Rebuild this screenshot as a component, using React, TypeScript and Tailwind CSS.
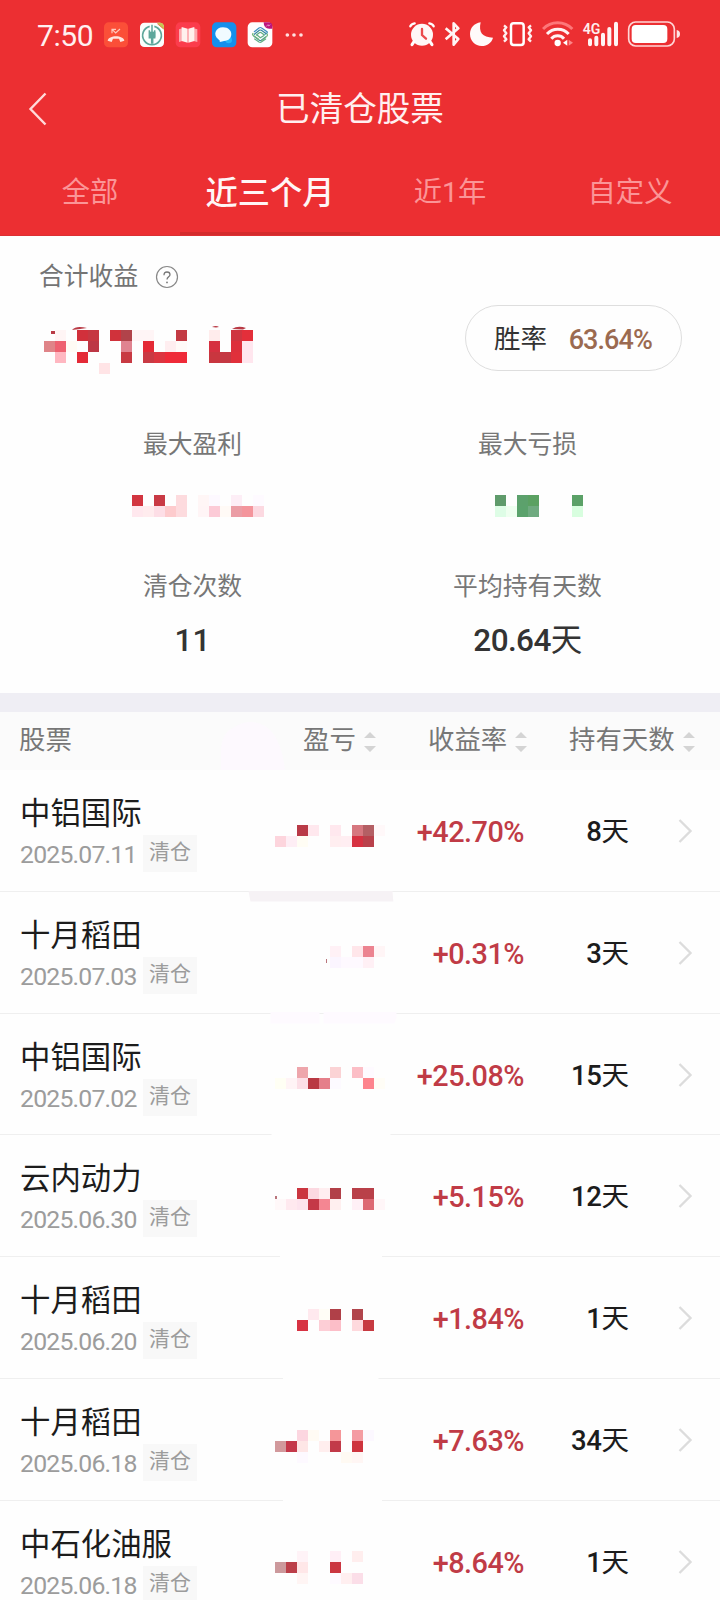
import type { ReactNode } from "react";

type Cell = [col: number, row: number, color: string];

const CELL = 11;

function Cells({ x, y, cells }: { x: number; y: number; cells: Cell[] }) {
  return (
    <g shapeRendering="crispEdges">
      {cells.map(([c, r, color]) => (
        <rect key={`${c}-${r}`} x={x + c * CELL} y={y + r * CELL} width={CELL} height={CELL} fill={color} />
      ))}
    </g>
  );
}

const totalCells: Cell[] = [
  [1, 0, "#fff5f5"], [3, 0, "#d1303b"], [4, 0, "#c63741"], [6, 0, "#d0323b"], [7, 0, "#b1434a"],
  [8, 0, "#fff5f6"], [9, 0, "#fff5f6"], [12, 0, "#c33b44"], [15, 0, "#ffecec"], [17, 0, "#cf3540"], [18, 0, "#e32f3a"],
  [0, 1, "#df8488"], [1, 1, "#ee6170"], [2, 1, "#fffbf5"], [4, 1, "#bd3745"], [7, 1, "#e08390"], [9, 1, "#e42a36"],
  [11, 1, "#ffeef0"], [12, 1, "#fffaf8"], [15, 1, "#d63040"], [17, 1, "#dd303c"], [18, 1, "#ffe6ee"],
  [1, 2, "#ffb7c1"], [3, 2, "#e42a37"], [7, 2, "#c83a43"], [9, 2, "#c93a44"], [10, 2, "#dc3540"], [11, 2, "#ef2a38"],
  [12, 2, "#ef2a38"], [15, 2, "#c9363f"], [16, 2, "#c53843"], [17, 2, "#e0303b"], [18, 2, "#ffe6ee"], [5, 3, "#ffe4e6"],
];

const profitCells: Cell[] = [
  [0, 0, "#d23540"], [2, 0, "#c93a45"], [4, 0, "#fddbde"], [6, 0, "#fff6f6"], [7, 0, "#fdf9ff"], [9, 0, "#fdeef6"], [11, 0, "#fefaff"],
  [0, 1, "#ffe8ee"], [1, 1, "#ffecee"], [2, 1, "#fddee6"], [3, 1, "#fdcbcd"], [4, 1, "#fddbde"], [6, 1, "#fff5f6"],
  [7, 1, "#fccbd7"], [8, 1, "#fffaf6"], [9, 1, "#eb9da5"], [10, 1, "#f4959c"], [11, 1, "#fcd9e1"],
];

const lossCells: Cell[] = [
  [0, 0, "#5f9b6b"], [2, 0, "#5ca16c"], [3, 0, "#5ba162"], [7, 0, "#5ba167"],
  [0, 1, "#defde6"], [1, 1, "#effff0"], [2, 1, "#5ba26c"], [3, 1, "#6faa80"], [7, 1, "#d8fedf"],
];

type Row = {
  name: string;
  date: string;
  rate: string;
  days: string;
  top: number;
  height: string;
  cellY: number;
  cells: Cell[];
  overlay?: ReactNode;
};

const rows: Row[] = [
  {
    name: "中铝国际", date: "2025.07.11", rate: "+42.70%", days: "8", top: 770, height: "h-[122px]", cellY: 825,
    cells: [
      [2, 0, "#b93a47"], [3, 0, "#ffe8ee"], [5, 0, "#ffe8ee"], [7, 0, "#d6777f"], [8, 0, "#b45f64"], [9, 0, "#fff8f9"],
      [0, 1, "#fdd5dd"], [1, 1, "#feeef5"], [2, 1, "#fffdf4"], [5, 1, "#ffeef0"], [6, 1, "#ffeef2"], [7, 1, "#d63141"], [8, 1, "#b9414b"],
    ],
    overlay: <path d="M248.5 891H392.5L393.3 901.6H250.5Z" fill="#f6f2f5" />,
  },
  {
    name: "十月稻田", date: "2025.07.03", rate: "+0.31%", days: "3", top: 892, height: "h-[122px]", cellY: 946,
    cells: [
      [5, 0, "#fff1f6"], [7, 0, "#ffe6ea"], [8, 0, "#ec8390"], [9, 0, "#fff5f6"],
      [5, 1, "#fbf5ff"], [6, 1, "#fef9ff"], [7, 1, "#fef9ff"], [8, 1, "#fff0f5"],
    ],
    overlay: (
      <>
        <rect x="326" y="959" width="1" height="4" fill="#b9757c" />
        <path d="M270.5 1012h49v11.5h-49zM323.5 1012h73v5l-2 6.5h-71z" fill="#fefaff" />
      </>
    ),
  },
  {
    name: "中铝国际", date: "2025.07.02", rate: "+25.08%", days: "15", top: 1014, height: "h-[121px]", cellY: 1067,
    cells: [
      [2, 0, "#eea6ac"], [5, 0, "#fbd3d5"], [7, 0, "#fcbec6"], [8, 0, "#fefaff"],
      [0, 1, "#fffff4"], [1, 1, "#fff4f6"], [2, 1, "#fcdfe7"], [3, 1, "#b93943"], [4, 1, "#e57f8a"], [5, 1, "#fdfaff"], [8, 1, "#fd848d"], [9, 1, "#fffdf6"],
    ],
    overlay: <rect x="271.5" y="1133" width="119" height="3" fill="#fefefe" />,
  },
  {
    name: "云内动力", date: "2025.06.30", rate: "+5.15%", days: "12", top: 1135, height: "h-[122px]", cellY: 1188,
    cells: [
      [2, 0, "#cb3640"], [3, 0, "#fcd9e1"], [4, 0, "#ffeef0"], [5, 0, "#b24048"], [7, 0, "#b94049"], [8, 0, "#b94049"],
      [0, 1, "#fff8f9"], [1, 1, "#ffe9ef"], [2, 1, "#fde4ee"], [3, 1, "#c43847"], [4, 1, "#f48692"], [5, 1, "#ffefef"], [7, 1, "#fff0f6"], [8, 1, "#dd6873"], [9, 1, "#fff6f8"],
    ],
    overlay: (
      <>
        <rect x="275" y="1196" width="2" height="3" fill="#b9757c" />
        <rect x="280" y="1255" width="102" height="3" fill="#fefefe" />
      </>
    ),
  },
  {
    name: "十月稻田", date: "2025.06.20", rate: "+1.84%", days: "1", top: 1257, height: "h-[122px]", cellY: 1309,
    cells: [
      [3, 0, "#ffe9ee"], [4, 0, "#fffdf6"], [5, 0, "#b04048"], [7, 0, "#b1454c"],
      [2, 1, "#d73343"], [4, 1, "#fdced6"], [5, 1, "#fcbec8"], [7, 1, "#fed9dd"], [8, 1, "#c73a41"],
    ],
    overlay: <rect x="283" y="1377" width="95.5" height="3" fill="#fefefe" />,
  },
  {
    name: "十月稻田", date: "2025.06.18", rate: "+7.63%", days: "34", top: 1379, height: "h-[122px]", cellY: 1430,
    cells: [
      [2, 0, "#fcd6e0"], [3, 0, "#fffbf4"], [5, 0, "#f59699"], [7, 0, "#f49ba3"], [8, 0, "#fcf8ff"],
      [0, 1, "#d2999c"], [1, 1, "#c5384a"], [2, 1, "#fee6e6"], [4, 1, "#ffeeee"], [5, 1, "#c23a49"], [7, 1, "#ce343e"],
      [2, 2, "#fdf9ff"], [6, 2, "#fffaf3"], [7, 2, "#fff6f4"],
    ],
    overlay: <rect x="283" y="1499" width="99" height="3" fill="#fefefe" />,
  },
  {
    name: "中石化油服", date: "2025.06.18", rate: "+8.64%", days: "1", top: 1501, height: "h-[122px]", cellY: 1551,
    cells: [
      [2, 0, "#fff3f7"], [5, 0, "#ffeff6"], [7, 0, "#ffeeee"],
      [0, 1, "#cc999c"], [1, 1, "#bc3f49"], [2, 1, "#ffe7e8"], [5, 1, "#cb3641"],
      [2, 2, "#fff5f4"], [5, 2, "#fefaff"], [6, 2, "#ffeff0"], [7, 2, "#fbdee8"],
    ],
  },
];

function Glyph({ box, className, children }: { box: string; className: string; children: ReactNode }) {
  return (
    <svg viewBox={box} className={`h-7 shrink-0 ${className}`} fill="none">
      {children}
    </svg>
  );
}

function StatusBar() {
  return (
    <div className="flex h-[70px] items-center pl-[37px] text-white">
      <span className="w-[66px] pt-px text-[30px] leading-[31px] tracking-[-0.4px] text-[#fff0f0]">7:50</span>
      <Glyph box="309 63 108 84" className="w-9">
        <rect x="312" y="67" width="72" height="75" rx="14" fill="#fb4f38" />
        <path d="M323 122c2-18 48-18 50 0l-12 4-4-10h-18l-4 10z" fill="#ffe5df" />
        <path d="M336 100V88h12M337 89l10 10 13-12" stroke="#ffc9bd" strokeWidth="3.5" />
      </Glyph>
      <Glyph box="417 63 108 84" className="w-9">
        <rect x="420" y="68" width="72" height="73" rx="13" fill="#fbfffd" />
        <path d="M471 68h8q13 0 13 13v8z" fill="#c8c552" />
        <path d="M472 71l18 15" stroke="#eb7a4e" strokeWidth="3" />
        <path d="M449 79a28 28 0 1 0 14 0" stroke="#5da79b" strokeWidth="5" />
        <path d="M448 91v22h7v18M464 91v22h-6v18M456 74v36" stroke="#5da79b" strokeWidth="4.5" />
        <rect x="447" y="95" width="19" height="17" fill="#5da79b" />
      </Glyph>
      <Glyph box="525 63 108 84" className="w-9">
        <rect x="527" y="67" width="74" height="75" rx="14" fill="#fb3c4c" />
        <path d="M537 88l10-3v38l-10 3zM581 85l11 3v38l-11-3z" fill="#fda9ae" />
        <path d="M545 81l18 5v42l-18-5zM583 81l-18 5v42l18-5z" fill="#fff1ee" />
      </Glyph>
      <Glyph box="633 63 108 84" className="w-9">
        <rect x="636" y="67" width="73" height="75" rx="14" fill="#158fec" />
        <circle cx="686" cy="120" r="10" fill="#27b5fa" />
        <path d="M669 82c33 0 33 41 3 41-4 0-7 3-13 3 2-4-1-5-4-8-17-13-9-36 14-36z" fill="#f1fbff" />
      </Glyph>
      <Glyph box="741 63 108 84" className="w-9">
        <rect x="743" y="67" width="74" height="75" rx="14" fill="#fffdfe" />
        <path d="M791 67h14q12 0 12 12v7h-9q-17 0-17-19z" fill="#bd147d" />
        <path d="M798 80l6-6 2 4 5-4" stroke="#f5c6e3" strokeWidth="2" />
        <g strokeWidth="3.6" strokeLinecap="round">
          <path d="M763 95l14-11q4-3 8 0l16 11q2 3-1 5l-5 3" stroke="#3c8fc0" />
          <path d="M763 103l15-12q3-2 6 0l13 9M762 109l16 12q3 2 6 0l13-10" stroke="#35879f" />
          <path d="M759 100q-3 3 0 6l17 12M801 102q3 3-1 7l-15 13" stroke="#72b87a" />
          <path d="M769 105l9-7q3-2 6 0l9 7M764 117l13 9q4 2 7 0l13-9M770 104l11 9 10-6" stroke="#61ae84" />
        </g>
      </Glyph>
      <Glyph box="849 63 72 84" className="w-6">
        <g fill="#ffe0e0">
          <circle cx="862" cy="105" r="5.5" />
          <circle cx="882" cy="105" r="5.5" />
          <circle cx="903" cy="105" r="5.5" />
        </g>
      </Glyph>
      <div className="ml-auto flex pr-[37px]">
        <Glyph box="144 63 105 84" className="w-[35px]">
          <circle cx="186" cy="104" r="33" fill="#fff7f7" />
          <path d="M151 79q3-7 13-9M221 79q-3-7-13-9" stroke="#fff" strokeWidth="7" strokeLinecap="round" />
          <path d="M162 125l-6 9M210 125l6 9" stroke="#fff" strokeWidth="9" strokeLinecap="round" />
          <path d="M186 87v18l12 11" stroke="#eb4a4c" strokeWidth="7" strokeLinecap="round" />
        </Glyph>
        <Glyph box="249 63 78 84" className="w-[26px]">
          <path d="M257 85l38 32-14 17V70l14 15-38 33" stroke="#fff5f5" strokeWidth="8" strokeLinejoin="round" />
        </Glyph>
        <Glyph box="327 63 99 84" className="w-[33px]">
          <path d="M362 67c-7 30 5 46 37 46-4 15-17 25-34 25-20 0-35-16-35-36 0-18 12-32 32-35z" fill="#fffafa" />
        </Glyph>
        <Glyph box="426 63 120 84" className="w-10">
          <rect x="453" y="70" width="38" height="65" rx="8" stroke="#fff" strokeWidth="7.5" />
          <path d="M432 76l7 6-7 9 7 9-7 9 7 9-7 7M513 76l-7 6 7 9-7 9 7 9-7 9 7 7" stroke="#fff0f0" strokeWidth="7" strokeLinejoin="round" />
        </Glyph>
        <Glyph box="546 63 120 84" className="w-10">
          <path d="M549 87a61 61 0 0 1 88 0" stroke="#fd7779" strokeWidth="9" />
          <path d="M561 102a44 44 0 0 1 65 0M574 116a25 25 0 0 1 38 0" stroke="#fff3f3" strokeWidth="9" />
          <circle cx="593" cy="129" r="9.5" fill="#fff" />
          <path d="M622 119v18l-13-9z" fill="#fff" />
          <path d="M626 119v18l13-9z" fill="#fd8587" />
        </Glyph>
        <Glyph box="666 63 135 84" className="w-[45px]">
          <text x="668" y="102" fontSize="46" fontWeight="600" textLength="53" lengthAdjust="spacingAndGlyphs" fill="#ffeeee">4G</text>
          <path d="M690 121v12M709 113v20M729 104v29M748 87v46M768 71v62" stroke="#fff4f4" strokeWidth="12" strokeLinecap="round" />
        </Glyph>
        <Glyph box="801 63 168 84" className="w-14">
          <rect x="806" y="66" width="137" height="72" rx="21" stroke="#ffd6d6" strokeWidth="5" />
          <rect x="815" y="75" width="107" height="54" rx="12" fill="#fff" />
          <path d="M950 90q10 2 10 12t-10 12z" fill="#ffe5e5" />
        </Glyph>
      </div>
    </div>
  );
}

const tabs = [
  { label: "全部", active: false },
  { label: "近三个月", active: true },
  { label: "近1年", active: false },
  { label: "自定义", active: false },
];

function Header() {
  return (
    <header className="flex h-[236px] flex-col bg-[#ec2f32]">
      <StatusBar />
      <div className="flex h-[77px] items-center px-7">
        <svg viewBox="0 0 20 34" className="h-[34px] w-5" fill="none">
          <path d="M17.5 1.5L2.5 17l15 15.5" stroke="#ffdada" strokeWidth="2.4" />
        </svg>
        <h1 className="flex-1 pt-[2px] pr-5 text-center text-[33.6px] leading-10 text-[#fff0f0]">已清仓股票</h1>
      </div>
      <nav className="grid flex-1 grid-cols-4 border-b border-[#dc3033]">
        {tabs.map((tab) => (
          <button
            key={tab.label}
            className={
              tab.active
                ? "border-b-[3px] border-[#d42b2c] pt-[7px] text-[32.3px] leading-[78px] font-medium text-[#fff6f6]"
                : "border-b-[3px] border-transparent pt-[7px] text-[28.3px] leading-[78px] text-[#fb9597]"
            }
          >
            {tab.label}
          </button>
        ))}
      </nav>
    </header>
  );
}

function Summary() {
  return (
    <section className="h-[457px] px-[25px]">
      <div className="flex h-20 items-center gap-[17px] pt-px pl-[14px] text-[24.8px] text-[#747474]">
        <span>合计收益</span>
        <svg viewBox="0 0 24 24" className="h-6 w-6" fill="none">
          <circle cx="12" cy="12" r="10.5" stroke="#888" strokeWidth="1.2" />
          <path d="M9 10.2Q9 7 12 7t3 2.7c0 2-3 2.2-3 4.8" stroke="#777" strokeWidth="1.3" />
          <circle cx="12" cy="17.4" r="0.9" fill="#777" />
        </svg>
      </div>
      <div className="flex h-[56px] items-start justify-between pr-[13px] pl-[15px]">
        <svg viewBox="40 316 230 60" className="h-[60px] w-[230px]">
          <Cells x={44} y={330} cells={totalCells} />
          <path d="M72 330q4-5 15-2l-7 1zM51 331h4v3h-4zM212 327q4-2 7 0l-3 .5zM232 329q6-4 14-1l-3 1.5z" fill="#b93a45" />
        </svg>
        <div className="-mt-[11px] flex h-[66px] w-[217px] items-center justify-between rounded-full border border-[#dedede] pr-[29px] pl-[28px]">
          <span className="pt-[2px] text-[26.5px] leading-10 text-[#333]">胜率</span>
          <span className="pt-[3px] text-[27px] leading-10 font-medium tracking-[-0.9px] text-[#9b6a50]">63.64%</span>
        </div>
      </div>
      <dl className="grid grid-cols-2 text-center">
        <div className="flex h-[157px] flex-col items-center pt-[54px]">
          <dt className="text-[24.8px] leading-[38px] text-[#777]">最大盈利</dt>
          <dd className="mt-[31px] pl-[11px]">
            <svg viewBox="132 495 132 22" className="h-[22px] w-[132px]">
              <Cells x={132} y={495} cells={profitCells} />
            </svg>
          </dd>
        </div>
        <div className="flex h-[157px] flex-col items-center pt-[54px]">
          <dt className="text-[24.8px] leading-[38px] text-[#777]">最大亏损</dt>
          <dd className="mt-[31px] pl-[23px]">
            <svg viewBox="495 495 88 22" className="h-[22px] w-[88px]">
              <Cells x={495} y={495} cells={lossCells} />
            </svg>
          </dd>
        </div>
        <div className="flex flex-col items-center pt-[39px]">
          <dt className="text-[24.8px] leading-[38px] text-[#777]">清仓次数</dt>
          <dd className="mt-[16px] text-[31.5px] leading-[38px] font-medium text-[#333]">11</dd>
        </div>
        <div className="flex flex-col items-center pt-[39px]">
          <dt className="text-[24.8px] leading-[38px] text-[#777]">平均持有天数</dt>
          <dd className="mt-[16px] text-[31.5px] leading-[38px] font-medium tracking-[-0.6px] text-[#333]">
            20.64<span className="font-normal">天</span>
          </dd>
        </div>
      </dl>
    </section>
  );
}

function SortIcon() {
  return (
    <svg viewBox="0 0 12 20" className="mt-[2px] h-5 w-3" fill="#d4d4d4">
      <path d="M6 0l6 6H0zM6 20l6-6H0z" />
    </svg>
  );
}

function TableHead() {
  return (
    <div className="flex h-[58px] items-center bg-[#fbfbfb] pl-[19px] text-[26.4px] text-[#777]">
      <span className="w-[202px]">股票</span>
      <svg viewBox="0 0 64 48" className="h-12 w-16 self-end">
        <path d="M0 48V26Q2 10 12 6Q28-5 44 4Q60 14 64 48z" fill="#fdf9fe" />
      </svg>
      <div className="flex w-[143px] items-center gap-[8px] pl-[18px]">
        盈亏
        <SortIcon />
      </div>
      <div className="flex w-[141px] items-center gap-[8px] pl-0 whitespace-nowrap">
        收益率
        <SortIcon />
      </div>
      <div className="flex items-center gap-[8px] whitespace-nowrap">
        持有天数
        <SortIcon />
      </div>
    </div>
  );
}

function StockRow({ row, last }: { row: Row; last: boolean }) {
  return (
    <li className={`flex ${row.height} ${last ? "" : "border-b border-[#efefef]"}`}>
      <div className="w-[220px] shrink-0 pt-[23px] pl-5">
        <div className="text-[30.4px] leading-[42px] text-[#1c1c1c]">{row.name}</div>
        <div className="flex">
          <span className="w-[123px] pt-[5px] text-[24.8px] leading-[30px] tracking-[-0.8px] text-[#9c9c9c]">{row.date}</span>
          <span className="h-[37px] w-[54px] bg-[#f8f8f8] text-center text-[21px] leading-[35px] text-[#9c9c9c]">清仓</span>
        </div>
      </div>
      <svg viewBox={`220 ${row.top} 180 122`} className="h-[122px] w-[180px] shrink-0 overflow-visible">
        <Cells x={275} y={row.cellY} cells={row.cells} />
        {row.overlay}
      </svg>
      <span className="w-[124px] shrink-0 pt-[41px] text-right text-[28.8px] leading-[42px] font-medium tracking-[-0.5px] text-[#c03b46]">
        {row.rate}
      </span>
      <span className="w-[105px] shrink-0 pt-[41px] text-right text-[27.5px] leading-[42px] font-medium text-[#1c1c1c]">
        <span className="tracking-[-0.4px]">{row.days}</span>
        <span className="font-normal">天</span>
      </span>
      <svg viewBox="0 0 16 26" className="mt-[48px] ml-[48px] h-[26px] w-4" fill="none">
        <path d="M2.5 2L13.5 13l-11 11" stroke="#dcdcdc" strokeWidth="2.4" />
      </svg>
    </li>
  );
}

export default function App() {
  return (
    <main className="h-[1600px] w-[720px] overflow-hidden bg-[#fefefe] font-[Roboto,'Noto_Sans_CJK_SC',sans-serif]">
      <Header />
      <Summary />
      <div className="h-[19px] bg-[#efeef4]" />
      <TableHead />
      <ul>
        {rows.map((row, i) => (
          <StockRow key={row.top} row={row} last={i === rows.length - 1} />
        ))}
      </ul>
    </main>
  );
}
